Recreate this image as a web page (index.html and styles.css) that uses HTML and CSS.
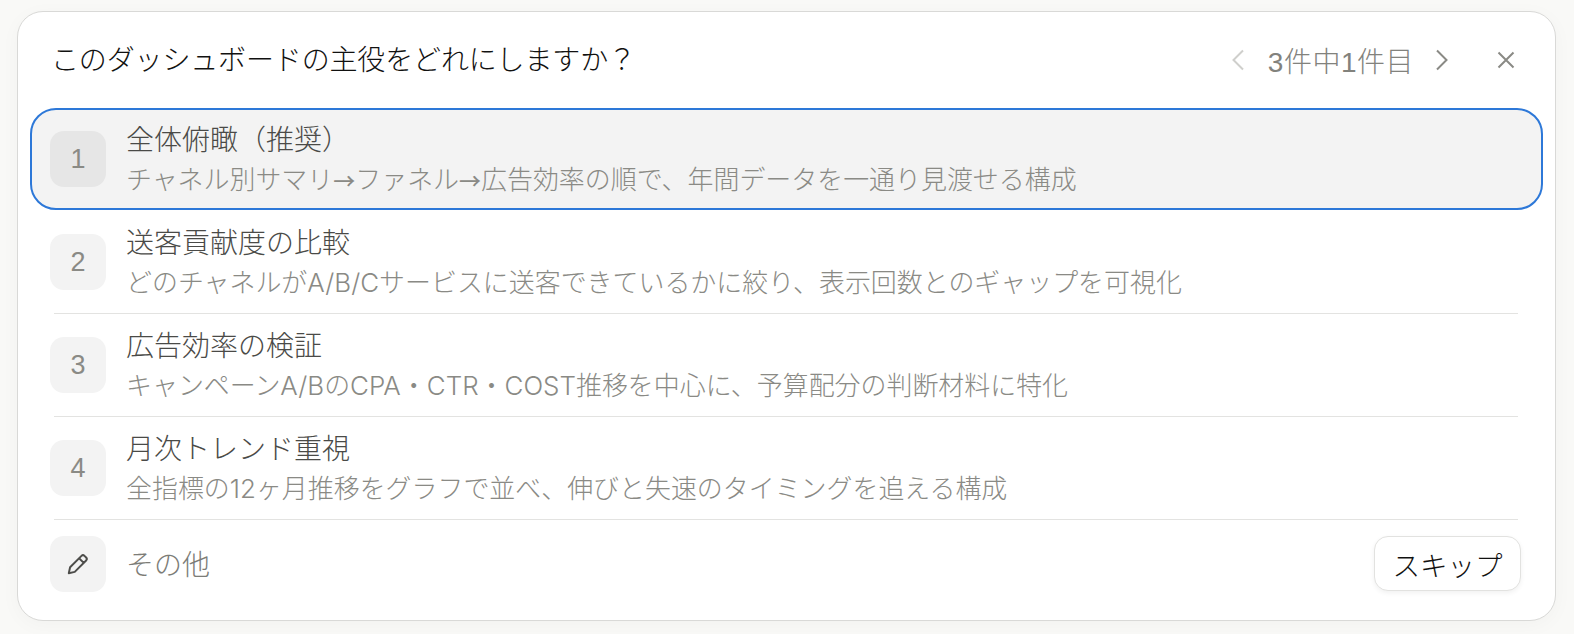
FILE: index.html
```html
<!DOCTYPE html>
<html lang="ja">
<head>
<meta charset="utf-8">
<title>質問</title>
<link rel="stylesheet" href="styles.css">
</head>
<body>
<section class="card">
  <header class="head">
    <h1 class="question">このダッシュボードの主役をどれにしますか？</h1>
    <div class="pager">
      <svg class="chev dim" viewBox="0 0 14 24"><path d="M12 2.500 2.500 12 12 21.500"/></svg>
      <span class="count">3件中1件目</span>
      <svg class="chev" viewBox="0 0 14 24"><path d="M2 2.500 11.500 12 2 21.500"/></svg>
    </div>
    <svg class="close" viewBox="0 0 18 18"><path d="M1.500 1.500 16.500 16.500M16.500 1.500 1.500 16.500"/></svg>
  </header>
  <ul class="options">
    <li class="option selected">
      <span class="num">1</span>
      <div class="copy"><div class="name">全体俯瞰（推奨）</div><div class="desc">チャネル別サマリ<span class="arrow">→</span>ファネル<span class="arrow">→</span>広告効率の順で、年間データを一通り見渡せる構成</div></div>
    </li>
    <li class="option">
      <span class="num">2</span>
      <div class="copy"><div class="name">送客貢献度の比較</div><div class="desc">どのチャネルがA/B/Cサービスに送客できているかに絞り、表示回数とのギャップを可視化</div></div>
    </li>
    <li class="option">
      <span class="num">3</span>
      <div class="copy"><div class="name">広告効率の検証</div><div class="desc">キャンペーンA/BのCPA・CTR・COST推移を中心に、予算配分の判断材料に特化</div></div>
    </li>
    <li class="option">
      <span class="num">4</span>
      <div class="copy"><div class="name">月次トレンド重視</div><div class="desc">全指標の12ヶ月推移をグラフで並べ、伸びと失速のタイミングを追える構成</div></div>
    </li>
  </ul>
  <footer class="other">
    <span class="num">
      <svg class="pencil" viewBox="0 0 24 24"><path d="M3.500 20.500 4.700 15 15.200 4.500a2 2 0 0 1 2.800 0l1.500 1.500a2 2 0 0 1 0 2.800L9 19.300ZM13 6.700l4.300 4.300"/></svg>
    </span>
    <span class="other-label">その他</span>
    <button class="skip">スキップ</button>
  </footer>
</section>
</body>
</html>
```
FILE: styles.css
```css
* { box-sizing: border-box; }
html, body { height: 100%; }
body {
  margin: 0;
  padding: 11px 18px 13px 17px;
  background: #f9f9f7;
  font-family: "Liberation Sans", "Noto Sans CJK JP", sans-serif;
}
.card {
  height: 610px;
  background: #fff;
  border: 1px solid #d9d9d7;
  border-radius: 26px;
  padding: 0 12px;
  box-shadow: 0 4px 20px rgba(0,0,0,.03);
}
.head {
  height: 96px;
  display: flex;
  align-items: center;
  padding: 0 28px 0 21px;
}
.question {
  flex: 1;
  margin: 0 0 4px;
  font-size: 28px;
  font-weight: 300;
  letter-spacing: -.15px;
  color: #111110;
}
.pager { display: flex; align-items: center; color: #82827d; }
.chev { width: 14px; height: 24px; fill: none; stroke: #8a8a85; stroke-width: 2; }
.chev.dim { stroke: #cfcfcc; }
.count { font-size: 28px; font-weight: 300; letter-spacing: .5px; margin: 0 21px 0 23px; }
.close { width: 18px; height: 18px; margin-left: 48px; fill: none; stroke: #8a8a85; stroke-width: 2; }
.options { list-style: none; margin: 0; padding: 0; }
.option {
  height: 103px;
  display: flex;
  align-items: center;
  gap: 20px;
  padding: 0 20px;
  position: relative;
}
.option + .option + .option::before,
.option:last-child::after {
  content: "";
  position: absolute;
  left: 24px;
  right: 25px;
  height: 1px;
  background: #e3e3e1;
}
.option + .option + .option::before { top: 0; }
.option:last-child::after { bottom: -1px; }
.option.selected {
  height: 102px;
  padding: 0 18px;
  background: #f3f3f3;
  border: 2px solid #2d78d8;
  border-radius: 26px;
}
.num {
  width: 56px;
  height: 56px;
  flex: none;
  display: flex;
  align-items: center;
  justify-content: center;
  padding-top: 2px;
  background: #f3f3f3;
  border-radius: 14px;
  font-size: 27px;
  color: #8a8a85;
}
.selected .num { background: #e6e6e6; padding-top: 0; }
.copy { min-width: 0; margin-top: 2px; }
.selected .copy { margin-top: 3px; }
.name { font-size: 28px; font-weight: 300; line-height: 41px; color: #4a4a47; }
.selected .name { line-height: 38px; }
.desc {
  font-family: Inter, "Noto Sans CJK JP", sans-serif;
  font-size: 25.950px;
  font-weight: 300;
  line-height: 38px;
  color: #8a8a85;
  white-space: nowrap;
}
.arrow { font-family: "Noto Sans CJK JP", sans-serif; font-size: 22px; font-weight: 500; }
.other {
  height: 87px;
  display: flex;
  align-items: center;
  gap: 20px;
  padding: 2px 20px 0;
}
.pencil { width: 26px; height: 26px; fill: none; stroke: #4d4d4a; stroke-width: 1.800; stroke-linejoin: round; stroke-linecap: round; }
.other .num { padding-top: 0; }
.other-label { flex: 1; margin-bottom: 2px; font-size: 28px; font-weight: 300; color: #7c7c77; }
.skip {
  width: 147px;
  height: 55px;
  margin-right: 2px;
  padding: 0;
  background: #fff;
  border: 1.500px solid #e2e2e0;
  border-radius: 14px;
  box-shadow: 0 2px 5px rgba(0,0,0,.06);
  font: inherit;
  font-size: 27.500px;
  font-weight: 300;
  color: #111110;
}
```
